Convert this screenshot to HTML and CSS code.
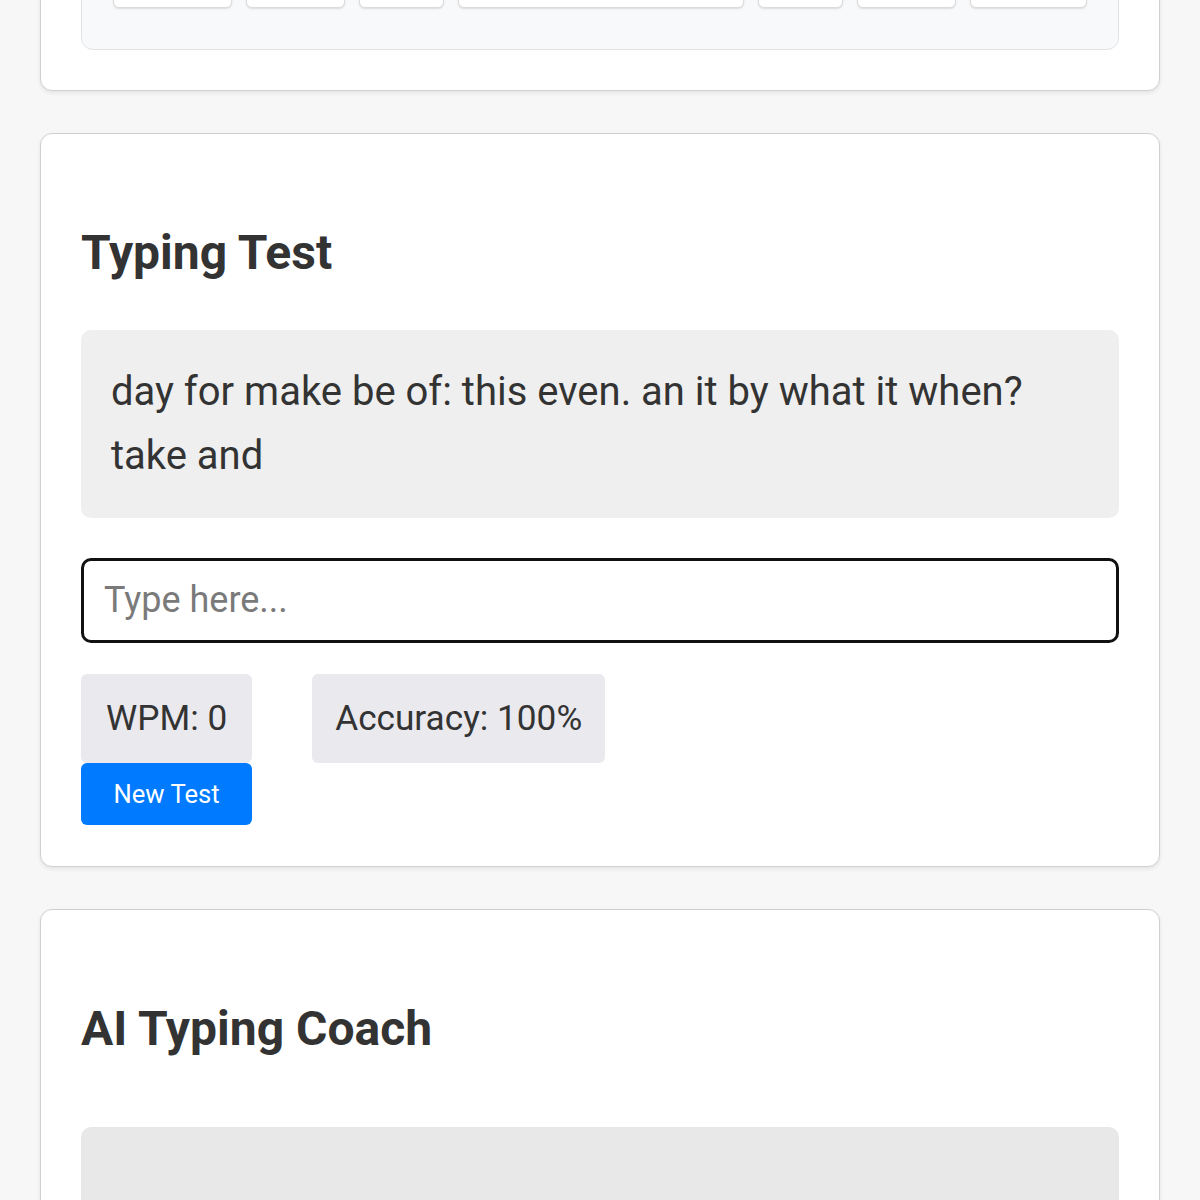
FILE: index.html
```html
<!DOCTYPE html>
<html lang="en">
<head>
    <meta charset="UTF-8">
    <meta name="viewport" content="width=device-width, initial-scale=1.0">
    <title>Typing Trainer</title>
    <link rel="stylesheet" href="styles.css">
</head>
<body>
    <div id="app">
        <section class="card card-keyboard">
            <div id="keyboard">
                <div class="key-row">
                    <div class="key" style="width: 118px"></div>
                    <div class="key" style="width: 98px"></div>
                    <div class="key" style="width: 84px"></div>
                    <div class="key" style="width: 288px"></div>
                    <div class="key" style="width: 84px"></div>
                    <div class="key" style="width: 98px"></div>
                    <div class="key" style="width: 116px"></div>
                </div>
            </div>
        </section>

        <section class="card card-test">
            <h2>Typing Test</h2>
            <div id="test-text">day for make be of: this even. an it by what it when? take and</div>
            <input type="text" id="test-input" placeholder="Type here...">
            <div class="stats">
                <div class="stat" id="wpm">WPM: 0</div>
                <div class="stat" id="accuracy">Accuracy: 100%</div>
                <button id="new-test">New Test</button>
            </div>
        </section>

        <section class="card">
            <h2>AI Typing Coach</h2>
            <div id="coach-feedback"></div>
        </section>
    </div>
</body>
</html>
```

FILE: styles.css
```css
body {
    font-family: Roboto, "Liberation Sans", sans-serif;
    background-color: #f7f7f7;
    color: #333;
    margin: 0;
}
#app {
    display: flex;
    flex-direction: column;
    gap: 42px;
    padding: 0 40px;
}
.card {
    background-color: #fff;
    border: 1px solid #d0d0d0;
    border-radius: 12px;
    box-shadow: 0 2px 4px rgba(0, 0, 0, 0.08);
    padding: 40px;
}
.card-keyboard {
    margin-top: -106px;
}
.card-test {
    padding-bottom: 41px;
}
h2 {
    font-size: 48px;
    font-weight: 700;
    margin: 50px 0 49px;
    color: #333;
}
#keyboard {
    background-color: #f8f9fa;
    border: 1px solid #e3e3e6;
    border-radius: 12px;
    padding: 20px 31px 41px;
}
.key-row {
    display: flex;
    gap: 14px;
}
.key {
    height: 50px;
    background-color: #fff;
    border: 1px solid #dcdcdc;
    border-radius: 6px;
    box-shadow: 0 1px 2px rgba(0, 0, 0, 0.12);
}
#test-text {
    background-color: #efefef;
    border-radius: 10px;
    padding: 30px;
    font-size: 40px;
    line-height: 64px;
    color: #333;
}
#test-input {
    display: block;
    width: 100%;
    box-sizing: border-box;
    margin-top: 40px;
    padding: 18px 20px;
    font-family: inherit;
    font-size: 36px;
    line-height: 43px;
    border: 3px solid #111;
    border-radius: 10px;
    color: #333;
    outline: none;
}
#test-input::placeholder {
    color: #7a7a7a;
}
.stats {
    display: grid;
    grid-template-columns: auto auto;
    justify-content: start;
    column-gap: 60px;
    margin-top: 31px;
}
.stat {
    background-color: #e9e9ee;
    border-radius: 6px;
    padding: 24px 25px;
    font-size: 35.2px;
    line-height: 41px;
    text-align: center;
}
#accuracy {
    padding: 24px 23px;
}
#new-test {
    grid-column: 1;
    background-color: #007bff;
    color: #fff;
    border: none;
    border-radius: 6px;
    padding: 16px 20px;
    font-family: inherit;
    font-size: 25.6px;
    line-height: 30px;
    cursor: pointer;
}
#coach-feedback {
    margin-top: 70px;
    background-color: #e8e8e8;
    border-radius: 10px;
    min-height: 220px;
}
```
